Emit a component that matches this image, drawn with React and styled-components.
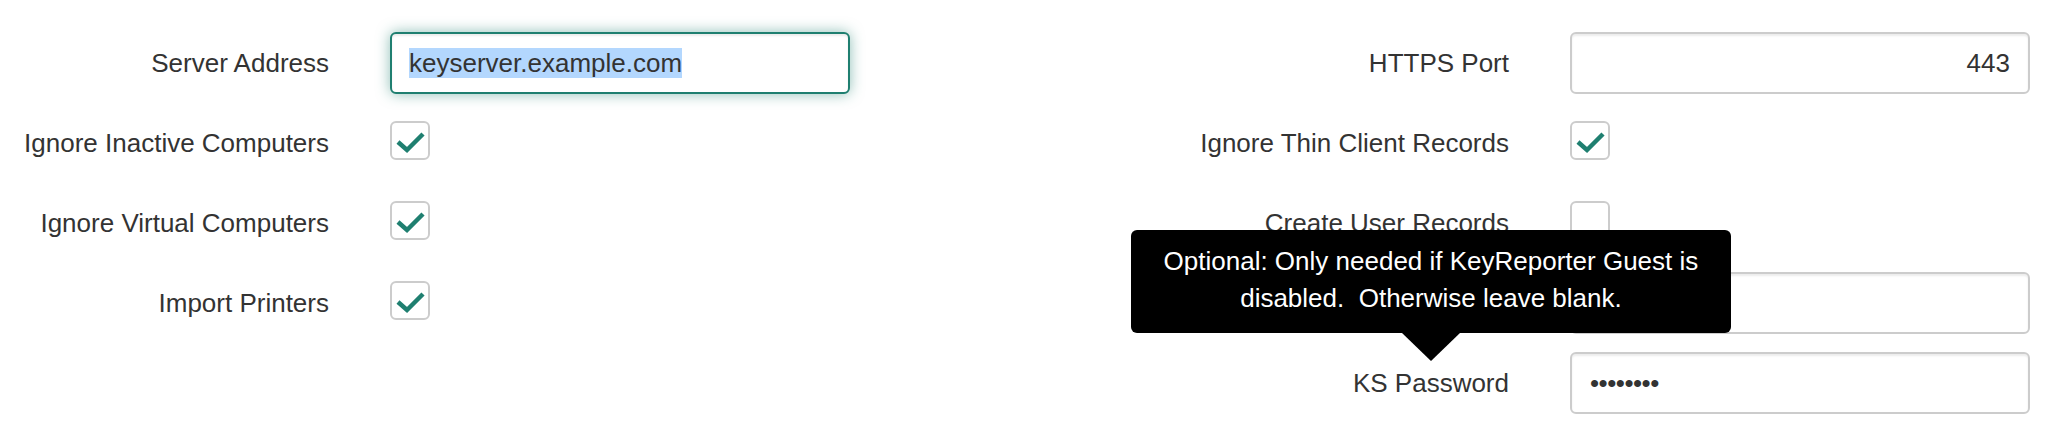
import React from "react";
import styled, { createGlobalStyle } from "styled-components";

const GlobalStyle = createGlobalStyle`
  body {
    margin: 0;
    background: #fff;
    font-family: "Liberation Sans", Arial, Helvetica, sans-serif;
    font-size: 26px;
    color: #333;
  }
`;

const Form = styled.form`
  display: grid;
  grid-template-columns: 850px 850px;
  column-gap: 330px;
  align-items: start;
  padding-top: 32px;
`;

const Column = styled.div`
  display: flex;
  flex-direction: column;
  gap: 18px;
`;

const Row = styled.div`
  display: grid;
  grid-template-columns: 329px 460px;
  column-gap: 61px;
  align-items: center;
  height: 62px;
`;

const Label = styled.label`
  text-align: right;
  line-height: 37px;
  white-space: nowrap;
`;

const Anchor = styled.span`
  position: relative;
  display: inline-block;
`;

const Field = styled.input`
  box-sizing: border-box;
  width: 100%;
  height: 62px;
  padding: 0 18px;
  border: 2px solid #ccc;
  border-radius: 6px;
  box-shadow: inset 0 2px 2px rgba(0, 0, 0, 0.075);
  font: inherit;
  color: #333;
  background: #fff;
  text-align: ${(p) => (p.$align === "right" ? "right" : "left")};
  outline: none;
  letter-spacing: ${(p) => (p.type === "password" ? "-0.5px" : "normal")};
`;

const FocusedField = styled.div`
  box-sizing: border-box;
  width: 100%;
  height: 62px;
  padding: 0 17px;
  display: flex;
  align-items: center;
  border: 2px solid #1f7f70;
  border-radius: 6px;
  background: #fff;
  box-shadow: inset 0 2px 2px rgba(0, 0, 0, 0.075), 0 0 14px rgba(31, 127, 112, 0.5);
`;

const Selected = styled.span`
  background: #b3d7fe;
  line-height: 30px;
`;

const Box = styled.span`
  box-sizing: border-box;
  align-self: start;
  margin-top: 9px;
  width: 40px;
  height: 39px;
  border: 2px solid #ccc;
  border-radius: 6px;
  background: #fff;
  display: flex;
  align-items: center;
  justify-content: center;
`;

const Tip = styled.div`
  position: absolute;
  left: 50%;
  bottom: calc(100% + 32px);
  transform: translateX(-50%);
  box-sizing: border-box;
  width: 600px;
  padding: 13px 16px 16px;
  background: #000;
  color: #fff;
  border-radius: 6px;
  text-align: center;
  line-height: 37px;
  white-space: nowrap;
  z-index: 2;

  &::after {
    content: "";
    position: absolute;
    top: 100%;
    left: 50%;
    margin-left: -29px;
    border-style: solid;
    border-width: 28px 29px 0;
    border-color: #000 transparent transparent;
  }
`;

function Check({ checked }) {
  return (
    <Box>
      {checked && (
        <svg width="36" height="35" viewBox="0 0 36 35">
          <polyline
            points="6,19 15,27 31,11"
            fill="none"
            stroke="#1f7f70"
            strokeWidth="4.5"
          />
        </svg>
      )}
    </Box>
  );
}

export default function App() {
  return (
    <>
      <GlobalStyle />
      <Form onSubmit={(e) => e.preventDefault()}>
        <Column>
          <Row>
            <Label>Server Address</Label>
            <FocusedField>
              <Selected>keyserver.example.com</Selected>
            </FocusedField>
          </Row>
          <Row>
            <Label>Ignore Inactive Computers</Label>
            <Check checked />
          </Row>
          <Row>
            <Label>Ignore Virtual Computers</Label>
            <Check checked />
          </Row>
          <Row>
            <Label>Import Printers</Label>
            <Check checked />
          </Row>
        </Column>

        <Column>
          <Row>
            <Label>HTTPS Port</Label>
            <Field $align="right" defaultValue="443" readOnly />
          </Row>
          <Row>
            <Label>Ignore Thin Client Records</Label>
            <Check checked />
          </Row>
          <Row>
            <Label>Create User Records</Label>
            <Check />
          </Row>
          <Row>
            <Label>KS Username</Label>
            <Field defaultValue="" readOnly />
          </Row>
          <Row>
            <Label>
              <Anchor>
                KS Password
                <Tip>
                  Optional: Only needed if KeyReporter Guest is
                  <br />
                  {"disabled.\u00a0 Otherwise leave blank."}
                </Tip>
              </Anchor>
            </Label>
            <Field type="password" defaultValue="password" readOnly />
          </Row>
        </Column>
      </Form>
    </>
  );
}
